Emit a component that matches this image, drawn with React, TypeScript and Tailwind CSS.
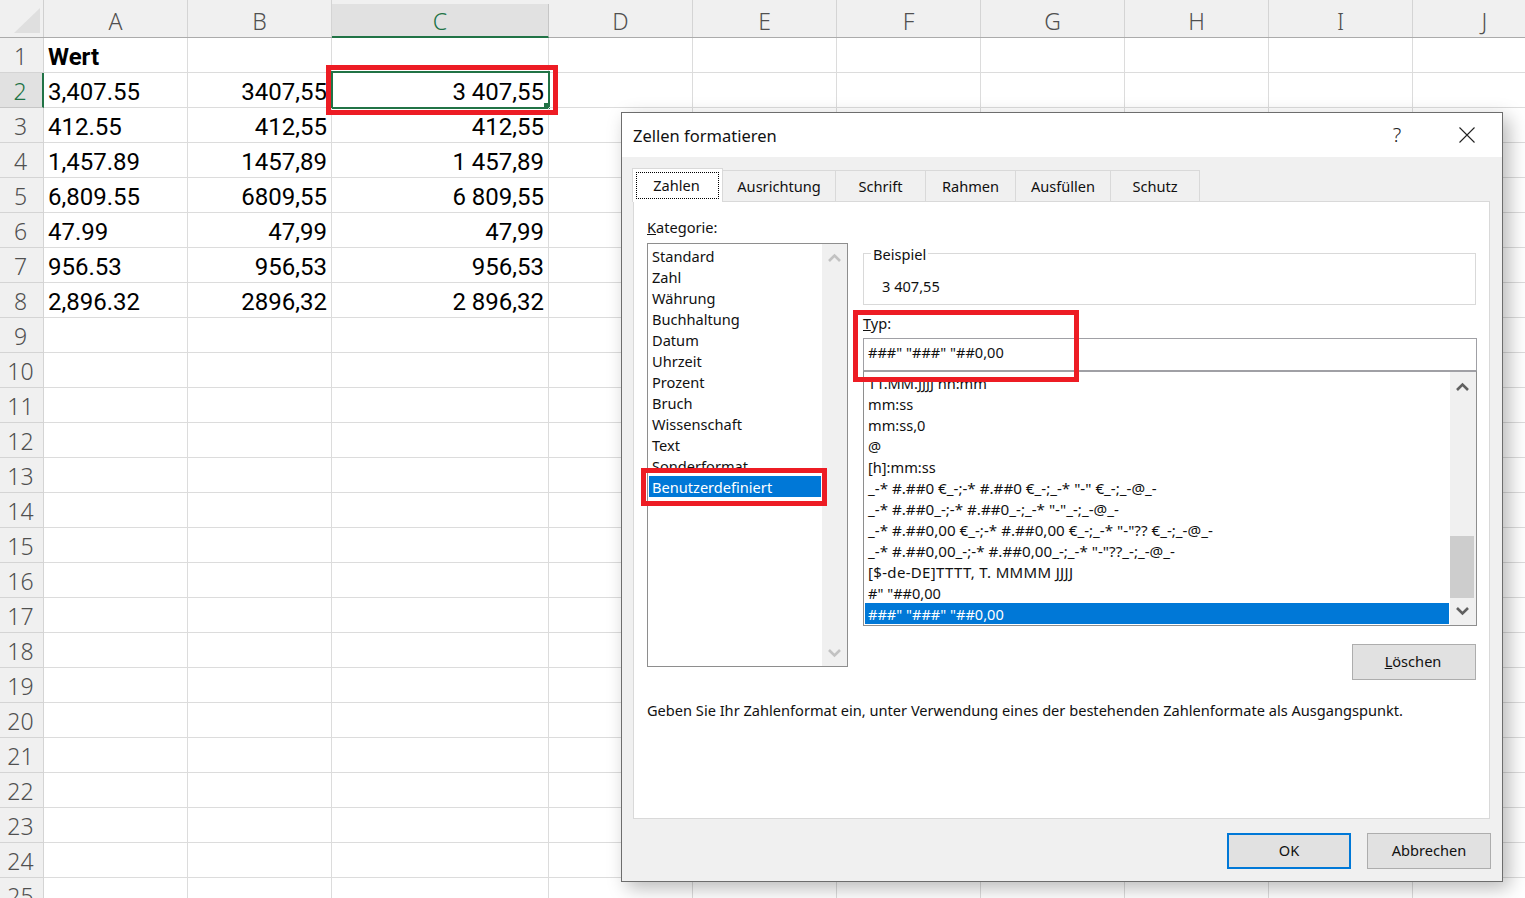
import React from 'react'

const sans = 'font-["Noto_Sans",sans-serif]'
const cols = ['A', 'B', 'C', 'D', 'E', 'F', 'G', 'H', 'I', 'J']
const gridCols = 'grid grid-cols-[44px_144px_144px_217px_144px_144px_144px_144px_144px_144px_144px]'

const data: Record<number, [string, string, string]> = {
  1: ['Wert', '', ''],
  2: ['3,407.55', '3407,55', '3 407,55'],
  3: ['412.55', '412,55', '412,55'],
  4: ['1,457.89', '1457,89', '1 457,89'],
  5: ['6,809.55', '6809,55', '6 809,55'],
  6: ['47.99', '47,99', '47,99'],
  7: ['956.53', '956,53', '956,53'],
  8: ['2,896.32', '2896,32', '2 896,32'],
}

const rows = Array.from({ length: 25 }, (_, i) => i + 1)
const categories = ['Standard', 'Zahl', 'Währung', 'Buchhaltung', 'Datum', 'Uhrzeit', 'Prozent', 'Bruch', 'Wissenschaft', 'Text', 'Sonderformat']
const formats = [
  'TT.MM.JJJJ hh:mm',
  'mm:ss',
  'mm:ss,0',
  '@',
  '[h]:mm:ss',
  '_-* #.##0 €_-;-* #.##0 €_-;_-* "-" €_-;_-@_-',
  '_-* #.##0_-;-* #.##0_-;_-* "-"_-;_-@_-',
  '_-* #.##0,00 €_-;-* #.##0,00 €_-;_-* "-"?? €_-;_-@_-',
  '_-* #.##0,00_-;-* #.##0,00_-;_-* "-"??_-;_-@_-',
  '[$-de-DE]TTTT, T. MMMM JJJJ',
  '#" "##0,00',
]
const tabs = [
  ['Ausrichtung', 'w-[113px]'],
  ['Schrift', 'w-[90px]'],
  ['Rahmen', 'w-[90px]'],
  ['Ausfüllen', 'w-[95px]'],
  ['Schutz', 'w-[89px]'],
]

function formatSize(f: string) {
  if (f.startsWith('_')) return 'text-[15.2px]'
  if (f.startsWith('[$')) return 'text-[15px] tracking-[0.33px]'
  return 'text-[14.6px]'
}

function Chevron({ up, color }: { up?: boolean; color: string }) {
  return (
    <svg width="13" height="9" viewBox="0 0 13 9" fill="none" className="shrink-0">
      <path d={up ? 'M1 8 L6.5 2.5 L12 8' : 'M1 1 L6.5 6.5 L12 1'} stroke={color} strokeWidth="2.6" />
    </svg>
  )
}

function Sheet() {
  return (
    <div className="font-['Roboto',sans-serif] text-[24px] text-black">
      <div className={`${gridCols} h-[38px] bg-[#f0f0f0] border-b border-[#ababab]`}>
        <div className="relative border-r border-[#d0d0d0]">
          <svg className="absolute left-[14px] top-[8px]" width="26" height="25" viewBox="0 0 26 25">
            <path d="M26 0 V25 H0 Z" fill="#dfdfdf" />
          </svg>
        </div>
        {cols.map((c) => (
          <div
            key={c}
            className={
              c === 'C'
                ? `${sans} mt-[4px] -mb-px flex items-center justify-center leading-none pt-[2px] bg-[#e1e1e1] border-b-2 border-[#217346] text-[#217346] text-[23px] font-light border-r border-r-[#c6c6c6]`
                : `${sans} flex items-center justify-center leading-none pt-[5px] border-r border-[#d4d4d4] text-[#505050] text-[23px] font-light`
            }
          >
            {c}
          </div>
        ))}
      </div>
      {rows.map((r) => {
        const d = data[r]
        return (
          <div key={r} className={`${gridCols} h-[35px]`}>
            <div
              className={
                r === 2
                  ? `${sans} flex items-center justify-center leading-none pt-[3px] pr-[2px] bg-[#e1e1e1] border-r-2 border-[#217346] text-[#217346] text-[23px] font-light border-b border-b-[#c6c6c6]`
                  : `${sans} flex items-center justify-center leading-none pt-[3px] pr-[2px] bg-[#f0f0f0] border-r border-b border-[#d4d4d4] text-[#505050] text-[23px] font-light`
              }
            >
              {r}
            </div>
            {cols.map((c, i) => (
              <div
                key={c}
                className={`relative flex items-center leading-none pt-[4px] border-r border-b border-[#dcdcdc] ${i === 0 ? 'justify-start pl-[4px]' : 'justify-end pr-[4px]'} ${r === 1 && i === 0 ? 'font-bold' : ''}`}
              >
                {i < 3 && d ? d[i] : ''}
                {r === 2 && c === 'C' && (
                  <div className="absolute -left-px -top-[2px] -right-[2px] -bottom-[2px] border-2 border-[#217346]">
                    <div className="absolute -right-[2px] -bottom-[2px] w-[6px] h-[6px] bg-[#217346]" />
                  </div>
                )}
              </div>
            ))}
          </div>
        )
      })}
    </div>
  )
}

function Dialog() {
  return (
    <div className={`${sans} absolute left-[621px] top-[112px] w-[882px] h-[770px] bg-[#f0f0f0] border border-[#6d6d6d] shadow-[6px_6px_18px_rgba(0,0,0,0.28)] text-[14.6px] text-[#111] flex flex-col`}>
      <div className="h-[44px] bg-white flex items-center justify-between pl-[11px]">
        <span className="text-[16.5px] pt-[2px]">Zellen formatieren</span>
        <div className="flex items-center">
          <span className="w-[70px] text-center text-[20px] font-light text-[#222]">?</span>
          <div className="w-[70px] flex justify-center">
            <svg width="16" height="16" viewBox="0 0 16 16">
              <path d="M0.5 0.5 L15.5 15.5 M15.5 0.5 L0.5 15.5" stroke="#222" strokeWidth="1.1" />
            </svg>
          </div>
        </div>
      </div>

      <div className="px-[11px] flex flex-col flex-1">
        <div className="flex items-end h-[44px]">
          <div className="relative z-10 -ml-px w-[91px] h-[34px] -mb-px bg-white border border-b-0 border-[#d9d9d9] p-[3px]">
            <div className="h-[27px] border border-dotted border-black flex items-center justify-center pr-[2px]">Zahlen</div>
          </div>
          {tabs.map(([t, w]) => (
            <div key={t} className={`${w} h-[31px] bg-[#f0f0f0] border border-l-0 border-b-0 border-[#d9d9d9] flex items-center justify-center pt-[2px]`}>
              {t}
            </div>
          ))}
        </div>

        <div className="w-[857px] h-[618px] bg-white border border-[#d9d9d9] pl-[13px] pr-[11px] pt-[15px]">
          <div className="flex gap-[15px] h-[464px]">
            <div className="w-[201px] shrink-0">
              <div className="h-[26px] leading-[20px]">
                <span className="underline">K</span>ategorie:
              </div>
              <div className="h-[424px] border border-[#8e8e8e] flex">
                <div className="flex-1 pt-[2px] pl-[1px] mr-px min-w-0">
                  {categories.map((c) => (
                    <div key={c} className="h-[21px] leading-[20px] pl-[3px]">{c}</div>
                  ))}
                  <div className="h-[21px] -mt-px leading-[23px] pl-[3px] bg-[#0078d7] text-white">Benutzerdefiniert</div>
                </div>
                <div className="w-[25px] bg-[#f0f0f0] flex flex-col justify-between items-center pt-[9px] pb-[8px]">
                  <Chevron up color="#c2c2c2" />
                  <Chevron color="#c2c2c2" />
                </div>
              </div>
            </div>

            <div className="w-[614px] shrink-0 pt-[36px]">
              <div className="relative h-[52px] mr-px border border-[#d9d9d9] pl-[18px] pt-[21px] leading-[22px]">
                <span className="absolute left-[7px] -top-[10px] bg-white px-[2px] leading-[20px]">Beispiel</span>
                3 407,55
              </div>
              <div className="h-[33px] pt-[7px] leading-[22px]">
                <span className="underline">T</span>yp:
              </div>
              <div className="h-[33px] border border-[#a0a0a5] flex items-center pl-[4px] pb-[4px]">###" "###" "##0,00</div>
              <div className="h-[256px] -mt-px border border-[#8e8e8e] border-t-2 border-t-[#a0a0a5] flex">
                <div className="flex-1 min-w-0 pl-[1px] mr-px">
                  {formats.map((f) => (
                    <div key={f} className={`h-[21px] leading-[23px] pl-[3px] whitespace-nowrap ${formatSize(f)}`}>{f}</div>
                  ))}
                  <div className="h-[21px] leading-[23px] pl-[3px] bg-[#0078d7] text-white">###" "###" "##0,00</div>
                </div>
                <div className="w-[26px] bg-[#f0f0f0] flex flex-col items-center pt-[10px] pb-[9px] pr-[2px]">
                  <Chevron up color="#606060" />
                  <div className="w-full flex-1 flex flex-col justify-end mb-[9px]">
                    <div className="h-[62px] bg-[#cdcdcd]" />
                  </div>
                  <Chevron color="#606060" />
                </div>
              </div>
              <div className="flex justify-end mt-[18px] mr-px">
                <div className="w-[124px] h-[36px] bg-[#e1e1e1] border border-[#adadad] flex items-center justify-center pr-[2px]">
                  <span><span className="underline">L</span>öschen</span>
                </div>
              </div>
            </div>
          </div>
          <div className="mt-[19px] leading-[20px] whitespace-nowrap">
            Geben Sie Ihr Zahlenformat ein, unter Verwendung eines der bestehenden Zahlenformate als Ausgangspunkt.
          </div>
        </div>

        <div className="flex justify-end gap-[16px] mt-[14px]">
          <div className="w-[124px] h-[36px] bg-[#e1e1e1] border-2 border-[#0078d7] flex items-center justify-center">OK</div>
          <div className="w-[124px] h-[36px] bg-[#e1e1e1] border border-[#adadad] flex items-center justify-center">Abbrechen</div>
        </div>
      </div>
    </div>
  )
}

export default function App() {
  return (
    <div className="relative w-[1525px] h-[898px] overflow-hidden bg-white">
      <Sheet />
      <Dialog />
      {/* red annotation boxes */}
      <div className="absolute left-[326px] top-[65px] w-[232px] h-[50px] border-[5px] border-[#ed1c24]" />
      <div className="absolute left-[853px] top-[310px] w-[226px] h-[72px] border-[5px] border-[#ed1c24]" />
      <div className="absolute left-[641px] top-[468px] w-[186px] h-[38px] border-[5px] border-[#ed1c24]" />
    </div>
  )
}
